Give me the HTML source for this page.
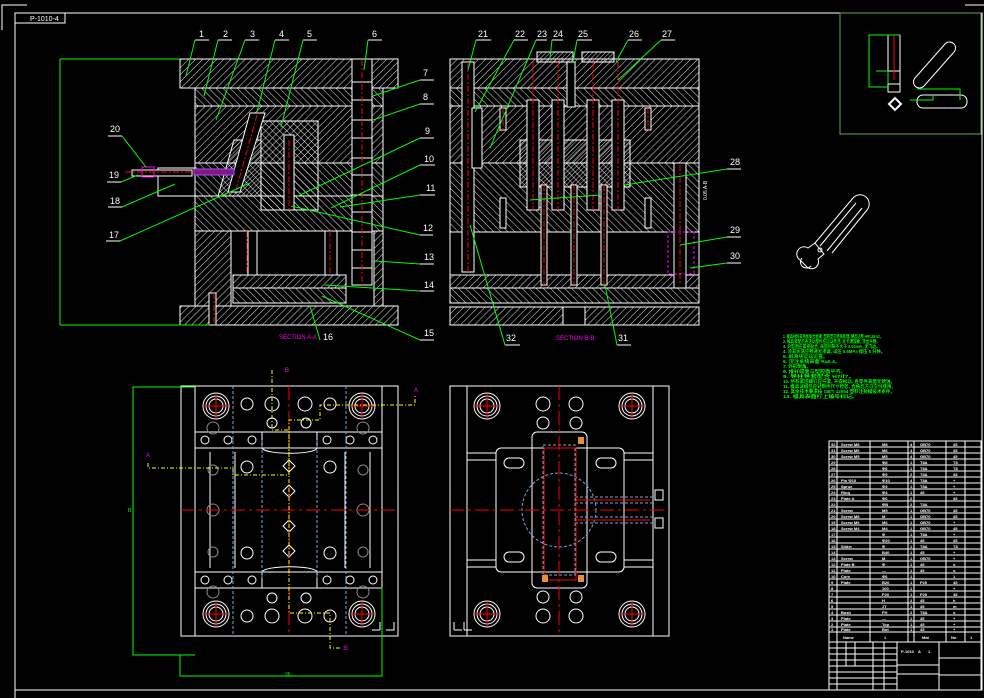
<!DOCTYPE html>
<html><head><meta charset="utf-8"><style>
html,body{margin:0;padding:0;background:#000;width:984px;height:698px;overflow:hidden}
svg{display:block}
text{font-family:"Liberation Sans","Noto Sans CJK SC",sans-serif}
</style></head><body>
<svg width="984" height="698" viewBox="0 0 984 698" xmlns="http://www.w3.org/2000/svg">
<defs>
<pattern id="h1" width="5" height="5" patternUnits="userSpaceOnUse" patternTransform="rotate(45)"><line x1="0" y1="0" x2="0" y2="5" stroke="#fff" stroke-width="0.9"/></pattern>
<pattern id="h2" width="5" height="5" patternUnits="userSpaceOnUse" patternTransform="rotate(-45)"><line x1="0" y1="0" x2="0" y2="5" stroke="#fff" stroke-width="0.9"/></pattern>
<pattern id="h3" width="3" height="3" patternUnits="userSpaceOnUse" patternTransform="rotate(45)"><line x1="0" y1="0" x2="0" y2="3" stroke="#fff" stroke-width="0.8"/></pattern>
</defs>
<rect width="984" height="698" fill="#000"/>
<g stroke="#fff" fill="none" stroke-width="1">
<path d="M2,30 V5 H27"/><path d="M965,5 H984"/>
<path d="M15,698 V13 H982 V690 H15"/>
<rect x="15" y="13" width="50" height="10"/>
</g>
<text x="30" y="21" fill="#fff" font-size="7">P-1010-4</text>

<!-- SECTION A-A -->
<g stroke="#fff" stroke-width="1">
<rect x="180" y="59" width="218" height="29" fill="url(#h1)"/>
<rect x="195" y="88" width="188" height="18" fill="url(#h2)"/>
<rect x="195" y="106" width="188" height="57" fill="url(#h1)"/>
<rect x="195" y="163" width="188" height="33" fill="url(#h2)"/>
<rect x="195" y="196" width="188" height="35" fill="url(#h2)"/>
<rect x="195" y="231" width="36" height="75" fill="url(#h1)"/>
<rect x="374" y="231" width="9" height="75" fill="url(#h1)"/>
<rect x="233" y="275" width="113" height="13" fill="url(#h1)"/>
<rect x="233" y="288" width="113" height="15" fill="url(#h2)"/>
<rect x="180" y="306" width="218" height="19" fill="url(#h1)"/>
<rect x="248" y="231" width="9" height="44" fill="#000"/>
<rect x="325" y="231" width="12" height="44" fill="#000"/>
<rect x="261" y="121" width="57" height="89" fill="url(#h2)"/>
<polygon points="234,140 261,140 261,196 218,196" fill="url(#h3)"/>
<rect x="284" y="135" width="10" height="75" fill="#000"/>
<polygon points="250,113 265,113 240,192 228,192" fill="#000"/>
<rect x="352" y="59" width="20" height="226" fill="#000"/>
<line x1="352" y1="82" x2="372" y2="82"/><line x1="352" y1="100" x2="372" y2="100"/>
<line x1="352" y1="120" x2="372" y2="120"/><line x1="352" y1="138" x2="372" y2="138"/>
<line x1="352" y1="158" x2="372" y2="158"/><line x1="352" y1="175" x2="372" y2="175"/>
<line x1="352" y1="195" x2="372" y2="195"/><line x1="352" y1="212" x2="372" y2="212"/>
<line x1="352" y1="232" x2="372" y2="232"/><line x1="352" y1="250" x2="372" y2="250"/>
<line x1="352" y1="268" x2="372" y2="268"/>
<rect x="209" y="293" width="7" height="32" fill="#000"/>
<rect x="158" y="168" width="37" height="28" fill="#000"/>
<rect x="132" y="170" width="60" height="6" fill="#000"/>
</g>
<rect x="194" y="169" width="40" height="6" fill="#6a1a9a" stroke="#b04ff0"/>
<rect x="142" y="167" width="12" height="10" fill="none" stroke="#ff00ff"/>
<g stroke="#f00" stroke-width="1" stroke-dasharray="6,2,2,2" fill="none">
<line x1="362" y1="60" x2="362" y2="285"/>
<line x1="289" y1="140" x2="289" y2="210"/>
<line x1="257" y1="115" x2="236" y2="190"/>
<line x1="247" y1="231" x2="247" y2="275"/>
<line x1="330" y1="231" x2="330" y2="275"/>
<line x1="214" y1="293" x2="214" y2="325"/>
<line x1="125" y1="172" x2="230" y2="172"/>
</g>
<path d="M60,59 H180 M60,325 H210 M60,59 V325" stroke="#0f0" fill="none"/>
<g fill="#fff" font-size="9">
<text x="199" y="37">1</text><text x="223" y="37">2</text><text x="250" y="37">3</text><text x="279" y="37">4</text><text x="307" y="37">5</text><text x="372" y="37">6</text>
<text x="423" y="76">7</text><text x="423" y="100">8</text><text x="425" y="134">9</text><text x="424" y="162">10</text><text x="426" y="191">11</text><text x="423" y="231">12</text><text x="424" y="260">13</text><text x="424" y="288">14</text><text x="424" y="336">15</text><text x="323" y="340">16</text>
<text x="110" y="132">20</text><text x="109" y="178">19</text><text x="110" y="204">18</text><text x="109" y="238">17</text>
</g>
<path d="M195,40 H209 M218,40 H232 M245,40 H259 M275,40 H289 M303,40 H317 M368,40 H382 M420,80 H434 M420,104 H434 M420,138 H434 M420,165 H435 M420,195 H435 M420,235 H433 M420,264 H434 M420,291 H434 M420,340 H434 M108,136 H122 M107,182 H121 M108,207 H122 M106,241 H120" stroke="#fff"/>
<path d="M195,40 L186,76 M218,40 L204,96 M245,40 L216,120 M275,40 L257,112 M303,40 L281,127 M368,40 L364,70 M420,80 L373,96 M420,104 L373,120 M420,138 L298,196 M420,165 L331,208 M420,195 L340,207 M420,235 L291,206 M420,264 L375,261 M420,291 L325,285 M420,340 L322,296 M320,340 L310,306 M122,136 L146,167 M121,182 L138,175 M122,207 L175,184 M120,241 L250,183" stroke="#0f0" fill="none"/>
<text x="279" y="339" fill="#f0f" font-size="6">SECTION A-A</text>

<!-- SECTION B-B -->
<g stroke="#fff" stroke-width="1">
<rect x="450" y="59" width="249" height="29" fill="url(#h1)"/>
<rect x="450" y="88" width="249" height="18" fill="url(#h2)"/>
<rect x="450" y="106" width="249" height="57" fill="url(#h1)"/>
<rect x="450" y="163" width="249" height="69" fill="url(#h2)"/>
<rect x="450" y="232" width="249" height="43" fill="#000"/>
<rect x="450" y="275" width="249" height="13" fill="url(#h1)"/>
<rect x="450" y="288" width="249" height="15" fill="url(#h2)"/>
<rect x="450" y="307" width="249" height="18" fill="url(#h1)"/>
<rect x="563" y="307" width="22" height="18" fill="#000"/>
<rect x="537" y="52" width="36" height="10" fill="url(#h3)"/>
<rect x="582" y="52" width="32" height="10" fill="url(#h3)"/>
<rect x="520" y="140" width="110" height="47" fill="url(#h3)"/>
<rect x="462" y="62" width="12" height="210" fill="#000"/>
<rect x="472" y="108" width="10" height="60" fill="#000"/>
<rect x="674" y="163" width="12" height="125" fill="#000"/>
<rect x="527" y="100" width="12" height="110" fill="#000"/>
<rect x="552" y="100" width="12" height="110" fill="#000"/>
<rect x="587" y="100" width="12" height="110" fill="#000"/>
<rect x="612" y="100" width="12" height="110" fill="#000"/>
<rect x="541" y="185" width="6" height="100" fill="#000"/>
<rect x="571" y="185" width="6" height="100" fill="#000"/>
<rect x="601" y="185" width="6" height="100" fill="#000"/>
<rect x="567" y="62" width="8" height="45" fill="#000"/>
<rect x="500" y="108" width="6" height="22" fill="#000"/>
<rect x="645" y="108" width="6" height="22" fill="#000"/>
<rect x="500" y="198" width="6" height="30" fill="#000"/>
<rect x="645" y="198" width="6" height="30" fill="#000"/>
</g>
<g stroke="#f00" stroke-width="1" stroke-dasharray="6,2,2,2">
<line x1="468" y1="62" x2="468" y2="275"/><line x1="533" y1="62" x2="533" y2="210"/><line x1="558" y1="62" x2="558" y2="210"/>
<line x1="593" y1="62" x2="593" y2="210"/><line x1="618" y1="62" x2="618" y2="210"/><line x1="680" y1="165" x2="680" y2="285"/>
<line x1="544" y1="185" x2="544" y2="285"/><line x1="574" y1="185" x2="574" y2="285"/><line x1="604" y1="185" x2="604" y2="285"/>
<line x1="503" y1="108" x2="503" y2="130"/><line x1="648" y1="108" x2="648" y2="130"/>
</g>
<rect x="668" y="232" width="26" height="42" fill="none" stroke="#f0f" stroke-dasharray="3,2"/>
<text x="707" y="200" fill="#fff" font-size="5" transform="rotate(-90 707 200)">0.05 A-B</text>
<g fill="#fff" font-size="9">
<text x="478" y="37">21</text><text x="515" y="37">22</text><text x="537" y="37">23</text><text x="553" y="37">24</text><text x="578" y="37">25</text><text x="629" y="37">26</text><text x="662" y="37">27</text>
<text x="730" y="165">28</text><text x="730" y="233">29</text><text x="730" y="259">30</text><text x="506" y="341">32</text><text x="618" y="341">31</text>
</g>
<path d="M476,40 H491 M514,40 H528 M536,40 H547 M552,40 H563 M577,40 H592 M628,40 H642 M661,40 H675 M727,169 H741 M727,237 H741 M727,263 H741 M505,345 H520 M617,345 H631" stroke="#fff"/>
<path d="M476,40 L468,70 M514,40 L475,112 M536,40 L490,148 M552,40 L550,58 M577,40 L573,62 M628,40 L616,62 M661,40 L618,80 M727,169 L625,185 M727,237 L680,245 M727,263 L690,268 M505,345 L470,225 M617,345 L605,285 M530,200 L600,195" stroke="#0f0" fill="none"/>
<text x="556" y="340" fill="#f0f" font-size="6">SECTION B-B</text>

<!-- PLAN LEFT -->
<g stroke="#fff" fill="none" stroke-width="1">
<rect x="181" y="386" width="217" height="250"/>
<line x1="195" y1="386" x2="195" y2="636"/><line x1="382" y1="386" x2="382" y2="636"/>
<path d="M195,432 H382 M195,448 H382 M195,572 H382 M195,588 H382"/>
<path d="M262,432 V448 M317,432 V448 M262,572 V588 M317,572 V588"/>
<path d="M262,448 C265,455 315,455 317,448 M262,572 C265,565 315,565 317,572"/>
<path d="M235,452 V568 M345,452 V568 M210,452 V568 M370,452 V568"/>
<circle cx="216" cy="406" r="13"/><circle cx="216" cy="406" r="10"/><circle cx="216" cy="406" r="7"/>
<circle cx="362" cy="406" r="13"/><circle cx="362" cy="406" r="10"/><circle cx="362" cy="406" r="7"/>
<circle cx="216" cy="614" r="13"/><circle cx="216" cy="614" r="10"/><circle cx="216" cy="614" r="7"/>
<circle cx="362" cy="614" r="13"/><circle cx="362" cy="614" r="10"/><circle cx="362" cy="614" r="7"/>
<circle cx="247" cy="404" r="6"/><circle cx="272" cy="404" r="7"/><circle cx="305" cy="404" r="7"/><circle cx="330" cy="404" r="6"/>
<circle cx="247" cy="616" r="6"/><circle cx="272" cy="616" r="7"/><circle cx="305" cy="616" r="7"/><circle cx="330" cy="616" r="6"/>
<circle cx="272" cy="423" r="5"/><circle cx="306" cy="423" r="5"/><circle cx="272" cy="598" r="5"/><circle cx="306" cy="598" r="5"/>
<circle cx="247" cy="467" r="6"/><circle cx="330" cy="467" r="6"/><circle cx="247" cy="553" r="6"/><circle cx="330" cy="553" r="6"/>
<circle cx="205" cy="440" r="4"/><circle cx="228" cy="440" r="4"/><circle cx="252" cy="440" r="4"/><circle cx="327" cy="440" r="4"/><circle cx="350" cy="440" r="4"/><circle cx="373" cy="440" r="4"/>
<circle cx="205" cy="580" r="4"/><circle cx="228" cy="580" r="4"/><circle cx="252" cy="580" r="4"/><circle cx="327" cy="580" r="4"/><circle cx="350" cy="580" r="4"/><circle cx="373" cy="580" r="4"/>
<path d="M289,460 l6,6 -6,6 -6,-6z M289,485 l6,6 -6,6 -6,-6z M289,520 l6,6 -6,6 -6,-6z M289,545 l6,6 -6,6 -6,-6z"/>
<path d="M372,630 l8,0 M380,630 l0,-8 M386,630 h8 v-8"/>
</g>
<g stroke="#888" fill="none"><circle cx="213" cy="428" r="6"/><circle cx="363" cy="428" r="6"/><circle cx="213" cy="470" r="5"/><circle cx="363" cy="470" r="5"/><circle cx="213" cy="510" r="6"/><circle cx="363" cy="510" r="6"/><circle cx="213" cy="552" r="5"/><circle cx="363" cy="552" r="5"/><circle cx="213" cy="592" r="6"/><circle cx="363" cy="592" r="6"/></g>
<g stroke="#6fa8dc" stroke-dasharray="3,2" fill="none"><line x1="233" y1="386" x2="233" y2="636"/><line x1="346" y1="386" x2="346" y2="636"/><line x1="262" y1="440" x2="262" y2="580"/><line x1="317" y1="440" x2="317" y2="580"/></g>
<g stroke="#f00" fill="none"><path d="M181,510 H398" stroke-dasharray="14,4,3,4"/><path d="M289,386 V636" stroke-dasharray="14,4,3,4"/>
<path d="M204,406 h24 M216,394 v24 M350,406 h24 M362,394 v24 M204,614 h24 M216,602 v24 M350,614 h24 M362,602 v24"/></g>
<g stroke="#ff0" fill="none" stroke-dasharray="4,2,1,2"><path d="M272,370 V430 H289 V613 H330 V648 H340"/><path d="M148,463 V468 H233 V475 H289 V420 H320 V405 H415 V395"/></g>
<g fill="#f0f" font-size="6"><text x="285" y="372">B</text><text x="146" y="457">A</text><text x="414" y="392">A</text><text x="344" y="650">B</text></g>
<path d="M133,387 H195 M133,387 V655 H195 M180,655 V676 H382 V587" stroke="#0f0" fill="none"/>
<text x="128" y="512" fill="#0f0" font-size="5">B</text><text x="285" y="676" fill="#0f0" font-size="5">36</text>

<!-- PLAN RIGHT -->
<g stroke="#fff" fill="none" stroke-width="1">
<rect x="450" y="386" width="219" height="250"/>
<line x1="467" y1="386" x2="467" y2="636"/><line x1="653" y1="386" x2="653" y2="636"/>
<path d="M467,453 H496 M467,460 H496 M467,560 H496 M467,567 H496 M624,453 H653 M624,460 H653 M624,560 H653 M624,567 H653"/>
<rect x="496" y="448" width="128" height="124" rx="5"/>
<rect x="532" y="432" width="55" height="156" rx="5"/>
<rect x="504" y="458" width="20" height="10" rx="5"/><rect x="596" y="458" width="20" height="10" rx="5"/>
<rect x="504" y="552" width="20" height="10" rx="5"/><rect x="596" y="552" width="20" height="10" rx="5"/>
<circle cx="487" cy="406" r="13"/><circle cx="487" cy="406" r="10"/><circle cx="487" cy="406" r="7"/>
<circle cx="632" cy="406" r="13"/><circle cx="632" cy="406" r="10"/><circle cx="632" cy="406" r="7"/>
<circle cx="487" cy="614" r="13"/><circle cx="487" cy="614" r="10"/><circle cx="487" cy="614" r="7"/>
<circle cx="632" cy="614" r="13"/><circle cx="632" cy="614" r="10"/><circle cx="632" cy="614" r="7"/>
<circle cx="543" cy="404" r="7"/><circle cx="576" cy="404" r="7"/><circle cx="543" cy="423" r="6"/><circle cx="576" cy="423" r="6"/>
<circle cx="543" cy="616" r="7"/><circle cx="576" cy="616" r="7"/><circle cx="543" cy="597" r="6"/><circle cx="576" cy="597" r="6"/>
<path d="M454,630 v-8 M454,630 h8 M464,630 v-8 M464,630 h8"/>
<rect x="655" y="490" width="8" height="10"/><rect x="655" y="518" width="8" height="10"/>
</g>
<g stroke="#6fa8dc" fill="none" stroke-dasharray="3,2"><circle cx="559" cy="510" r="37"/><rect x="543" y="445" width="32" height="130"/><path d="M575,497 H655 M575,503 H655 M575,517 H655 M575,523 H655"/></g>
<g stroke="#f00" fill="none"><path d="M450,510 H669" stroke-dasharray="14,4,3,4"/><path d="M559,386 V636" stroke-dasharray="14,4,3,4"/><path d="M544,448 V580 H576 V448 Z M576,500 H650 M576,520 H650"/>
<path d="M475,406 h24 M487,394 v24 M620,406 h24 M632,394 v24 M475,614 h24 M487,602 v24 M620,614 h24 M632,602 v24"/></g>
<g fill="#e69138"><rect x="578" y="437" width="6" height="7"/><rect x="542" y="575" width="6" height="7"/><rect x="578" y="575" width="6" height="7"/></g>

<!-- DETAIL BOX -->
<rect x="840" y="13" width="141" height="121" fill="none" stroke="#6aa84f"/>
<g stroke="#fff" fill="none">
<rect x="888" y="35" width="12" height="36"/><rect x="888" y="71" width="12" height="13"/><rect x="888" y="84" width="12" height="8"/>
<path d="M889,104 l6,-6 6,6 -6,6z" stroke-width="2"/>
<rect x="917" y="95" width="50" height="13" rx="6"/>
<path d="M915,78 l30,-34 a6,6 0 0 1 9,8 l-30,34 a6,6 0 0 1 -9,-8z"/>
</g>
<g stroke="#0f0" fill="none"><path d="M869,35 H900 M869,35 V87 H888 M876,71 H888 V84 M917,89 H960 V100 M910,100 H933 V95"/><line x1="894" y1="35" x2="894" y2="80" stroke="#f00"/></g>

<!-- big rotated part -->
<g stroke="#fff" fill="none" stroke-width="1">
<path d="M815,243 L853,198 a9,9 0 0 1 14,12 L832,253"/>
<path d="M820,246 L856,203 M827,251 L862,208"/>
<path d="M815,243 L808,248 a7,7 0 0 0 -8,12 l6,6 a7,7 0 0 0 12,-7 l6,-5 z"/>
<path d="M802,258 a4,4 0 0 0 9,8"/>
<circle cx="820" cy="250" r="2"/>
</g>

<!-- notes -->
<g fill="#0f0" font-size="4.5" font-weight="bold">
<text x="783" y="338" textLength="100" lengthAdjust="spacingAndGlyphs">1. 模具材料采用优质合金钢, 型腔型芯经热处理, 硬度达到 HRC48-52。</text>
<text x="783" y="343" textLength="97" lengthAdjust="spacingAndGlyphs">2. 模具装配后各活动部件应运动灵活, 无卡滞现象, 顶出平稳。</text>
<text x="783" y="348" textLength="97" lengthAdjust="spacingAndGlyphs">3. 分型面应紧密贴合, 局部间隙不大于 0.02mm, 无飞边。</text>
<text x="783" y="353" textLength="102" lengthAdjust="spacingAndGlyphs">4. 冷却水道应畅通无渗漏, 试压 0.5MPa 保压 5 分钟。</text>
<text x="783" y="358" textLength="45" lengthAdjust="spacingAndGlyphs">5. 斜滑块运动可靠。</text>
<text x="783" y="363" textLength="57" lengthAdjust="spacingAndGlyphs">6. 浇注系统表面 Ra0.4。</text>
<text x="783" y="368" textLength="28" lengthAdjust="spacingAndGlyphs">7. 外形倒角。</text>
<text x="783" y="373" textLength="63" lengthAdjust="spacingAndGlyphs">8. 推杆端面与型腔面平齐。</text>
<text x="783" y="378" textLength="72" lengthAdjust="spacingAndGlyphs">9. 导柱导套配合 H7/f7。</text>
<text x="783" y="383" textLength="112" lengthAdjust="spacingAndGlyphs">10. 所有紧固螺钉应拧紧, 不得松动, 各零件表面无锈蚀。</text>
<text x="783" y="388" textLength="113" lengthAdjust="spacingAndGlyphs">11. 模具试模后应对制件尺寸检验, 合格后方可交付使用。</text>
<text x="783" y="393" textLength="112" lengthAdjust="spacingAndGlyphs">12. 其余技术要求按 GB/T 12554 塑料注射模技术条件。</text>
<text x="783" y="398" textLength="75" lengthAdjust="spacingAndGlyphs">13. 模具表面打上编号标记。</text>
</g>

<!-- TABLE -->
<g stroke="#fff" fill="none" stroke-width="1">
<rect x="829" y="441" width="152" height="249"/>
<path d="M837,441 V642 M870,441 V642 M908,441 V642 M914,441 V642 M946,441 V642 M965,441 V642"/>
<path d="M829,447 H981 M829,453 H981 M829,459 H981 M829,465 H981 M829,471 H981 M829,477 H981 M829,483 H981 M829,489 H981 M829,495 H981 M829,501 H981 M829,507 H981 M829,513 H981 M829,519 H981 M829,525 H981 M829,531 H981 M829,537 H981 M829,543 H981 M829,549 H981 M829,555 H981 M829,561 H981 M829,567 H981 M829,573 H981 M829,579 H981 M829,585 H981 M829,591 H981 M829,597 H981 M829,603 H981 M829,609 H981 M829,615 H981 M829,621 H981 M829,627 H981 M829,632 H981 M829,642 H981"/>
<path d="M897,642 V690 M939,642 V690 M897,665 H939 M897,674 H939 M939,658 H981 M939,675 H981"/>
<path d="M829,648 H897 M829,654 H897 M829,660 H897 M829,666 H897 M829,672 H897 M829,678 H897 M829,684 H897"/>
<path d="M837,642 V690 M846,642 V666 M855,642 V666 M873,642 V690 M884,642 V690"/>
</g>
<g fill="#fff" font-size="4" font-weight="bold">
<text x="831" y="446">32</text><text x="841" y="446">Screw M8</text><text x="882" y="446">M8</text><text x="910" y="446">4</text><text x="920" y="446">GB70</text><text x="953" y="446">45</text>
<text x="831" y="452">31</text><text x="841" y="452">Screw M6</text><text x="882" y="452">M6</text><text x="910" y="452">4</text><text x="920" y="452">GB70</text><text x="953" y="452">45</text>
<text x="831" y="458">30</text><text x="841" y="458">Screw M5</text><text x="882" y="458">M5</text><text x="910" y="458">4</text><text x="920" y="458">GB70</text><text x="953" y="458">45</text>
<text x="831" y="464">29</text><text x="882" y="464">Φ8</text><text x="910" y="464">1</text><text x="920" y="464">T8A</text><text x="953" y="464">T8</text>
<text x="831" y="470">28</text><text x="882" y="470">Φ6</text><text x="910" y="470">1</text><text x="920" y="470">T8A</text><text x="953" y="470">T8</text>
<text x="831" y="476">27</text><text x="882" y="476">Φ5</text><text x="910" y="476">2</text><text x="920" y="476">T8A</text><text x="953" y="476">45</text>
<text x="831" y="482">26</text><text x="841" y="482">Pin Φ10</text><text x="882" y="482">Φ10</text><text x="910" y="482">4</text><text x="920" y="482">T8A</text><text x="953" y="482">+</text>
<text x="831" y="488">25</text><text x="841" y="488">Sprue</text><text x="882" y="488">Φ3</text><text x="910" y="488">1</text><text x="920" y="488">T8A</text><text x="953" y="488">+</text>
<text x="831" y="494">24</text><text x="841" y="494">Ring</text><text x="882" y="494">Φ4</text><text x="910" y="494">1</text><text x="920" y="494">45</text><text x="953" y="494">+</text>
<text x="831" y="500">23</text><text x="841" y="500">Plate A</text><text x="882" y="500">Φ6</text><text x="910" y="500">2</text><text x="953" y="500">45</text>
<text x="831" y="506">22</text><text x="882" y="506">ΦB</text><text x="910" y="506">2</text><text x="920" y="506">T8A</text>
<text x="831" y="512">21</text><text x="841" y="512">Screw</text><text x="882" y="512">M5</text><text x="910" y="512">1</text><text x="920" y="512">GB70</text><text x="953" y="512">45</text>
<text x="831" y="518">20</text><text x="841" y="518">Screw M8</text><text x="882" y="518">M</text><text x="910" y="518">1</text><text x="920" y="518">GB70</text><text x="953" y="518">45</text>
<text x="831" y="524">19</text><text x="841" y="524">Screw M6</text><text x="882" y="524">M6</text><text x="910" y="524">1</text><text x="920" y="524">GB70</text><text x="953" y="524">+</text>
<text x="831" y="530">18</text><text x="841" y="530">Screw M4</text><text x="882" y="530">M4</text><text x="910" y="530">1</text><text x="920" y="530">GB70</text><text x="953" y="530">45</text>
<text x="831" y="536">17</text><text x="882" y="536">Φ</text><text x="910" y="536">1</text><text x="920" y="536">T8A</text><text x="953" y="536">+</text>
<text x="831" y="542">16</text><text x="882" y="542">Φ20</text><text x="910" y="542">1</text><text x="920" y="542">45</text><text x="953" y="542">45</text>
<text x="831" y="548">15</text><text x="841" y="548">Slider</text><text x="882" y="548">Φ</text><text x="910" y="548">1</text><text x="920" y="548">T8A</text><text x="953" y="548">T8</text>
<text x="831" y="554">14</text><text x="882" y="554">B40</text><text x="910" y="554">1</text><text x="920" y="554">45</text><text x="953" y="554">+</text>
<text x="831" y="560">13</text><text x="841" y="560">Screw</text><text x="882" y="560">M</text><text x="910" y="560">1</text><text x="920" y="560">GB70</text><text x="953" y="560">+</text>
<text x="831" y="566">12</text><text x="841" y="566">Plate B</text><text x="882" y="566">Φ</text><text x="910" y="566">1</text><text x="920" y="566">45</text><text x="953" y="566">o</text>
<text x="831" y="572">11</text><text x="841" y="572">Plate</text><text x="882" y="572">—</text><text x="910" y="572">1</text><text x="920" y="572">45</text><text x="953" y="572">o</text>
<text x="831" y="578">10</text><text x="841" y="578">Core</text><text x="882" y="578">Φ6</text><text x="910" y="578">1</text><text x="953" y="578">1</text>
<text x="831" y="584">9</text><text x="841" y="584">Plate</text><text x="882" y="584">B20</text><text x="910" y="584">1</text><text x="920" y="584">P20</text><text x="953" y="584">45</text>
<text x="831" y="590">8</text><text x="882" y="590">100</text><text x="910" y="590">1</text><text x="953" y="590">+</text>
<text x="831" y="596">7</text><text x="882" y="596">P20</text><text x="910" y="596">1</text><text x="920" y="596">P20</text><text x="953" y="596">45</text>
<text x="831" y="602">6</text><text x="882" y="602">H</text><text x="910" y="602">2</text><text x="920" y="602">45</text><text x="953" y="602">h</text>
<text x="831" y="608">5</text><text x="882" y="608">JT</text><text x="910" y="608">1</text><text x="920" y="608">45</text><text x="953" y="608">m</text>
<text x="831" y="614">4</text><text x="841" y="614">Bush</text><text x="882" y="614">FH</text><text x="910" y="614">2</text><text x="920" y="614">T8A</text><text x="953" y="614">o</text>
<text x="831" y="620">3</text><text x="841" y="620">Plate</text><text x="882" y="620">—</text><text x="910" y="620">1</text><text x="920" y="620">45</text><text x="953" y="620">+</text>
<text x="831" y="626">2</text><text x="841" y="626">Plate</text><text x="882" y="626">Top</text><text x="910" y="626">1</text><text x="920" y="626">45</text><text x="953" y="626">+</text>
<text x="831" y="631">1</text><text x="841" y="631">Plate</text><text x="882" y="631">Bot</text><text x="910" y="631">1</text><text x="920" y="631">45</text><text x="953" y="631">+</text>
<text x="843" y="639">Name</text><text x="884" y="639">1</text><text x="922" y="639">Mat</text><text x="951" y="639">No</text><text x="970" y="639">1</text>
<text x="901" y="653">P-1010</text><text x="918" y="653">A</text><text x="928" y="653">1</text>
</g>
</svg>
</body></html>
